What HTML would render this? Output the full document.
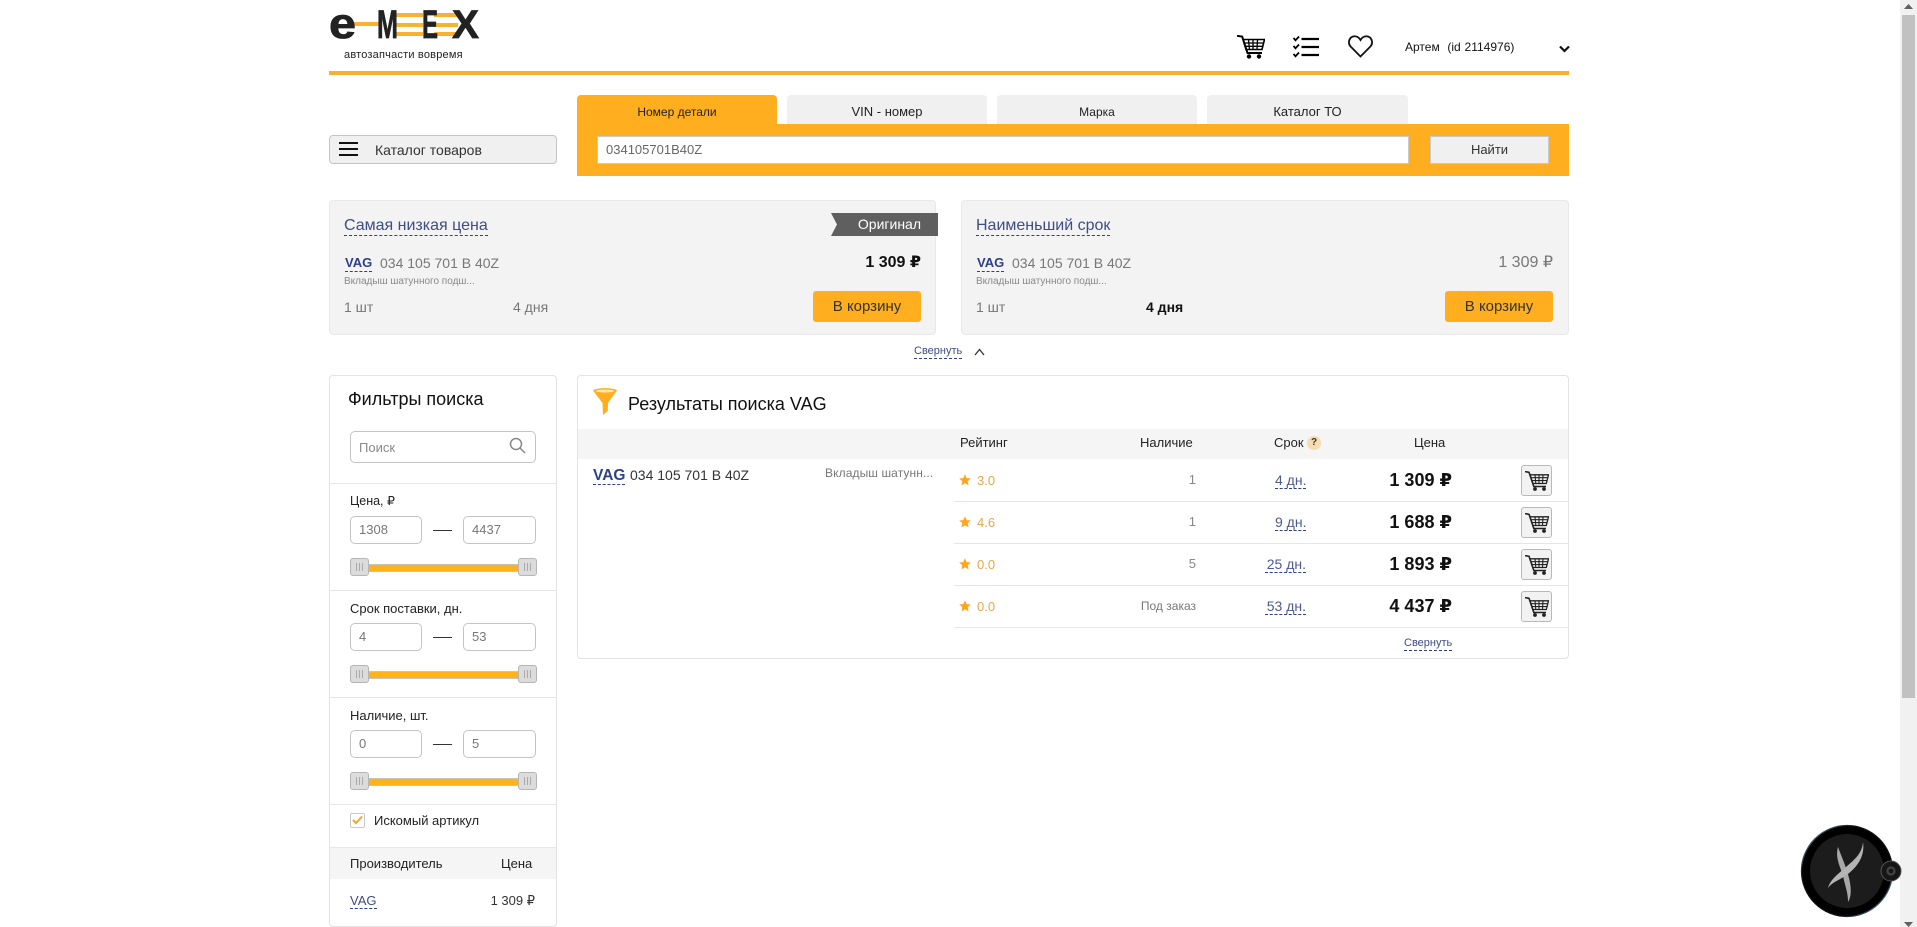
<!DOCTYPE html>
<html lang="ru"><head><meta charset="utf-8"><title>EMEX</title>
<style>
html,body{margin:0;padding:0;width:1917px;height:927px;overflow:hidden;background:#fff}
body{position:relative;font-family:"Liberation Sans","DejaVu Sans",sans-serif;color:#222}
.a,.t,.box,svg.i{position:absolute}
.t{white-space:nowrap;line-height:16px;height:16px}
.r{text-align:right}
.c{text-align:center}
.d{position:absolute;white-space:nowrap;color:#3f4c86;border-bottom:1px dashed #2f4088}
.tab{position:absolute;top:95px;height:29px;width:200px;background:#f0f0f0;border-radius:4px 4px 0 0;text-align:center;font-size:12.500px;line-height:34px;color:#222}
.card{position:absolute;top:200px;height:133px;width:605px;background:#f3f3f3;border:1px solid #e8e8e8;border-radius:4px}
.btn{position:absolute;width:108px;height:31px;top:291px;background:#ffae1f;border-radius:3px;text-align:center;line-height:32px;font-size:15px;color:#333}
.panel{position:absolute;background:#fff;border:1px solid #e3e3e3;border-radius:4px;box-sizing:border-box}
.sep{position:absolute;height:1px;background:#e6e6e6}
.in{position:absolute;box-sizing:border-box;background:#fff;border:1px solid #c4c4c4;border-radius:5px;height:28px;font-size:13px;line-height:26px;color:#777;padding-left:8px}
.h{position:absolute;width:19px;height:18px;box-sizing:border-box;background:#dcdcdc;border:1px solid #b5b5b5;border-radius:3px}
.h:after{content:"";position:absolute;left:5px;top:4px;width:1px;height:8px;background:#aaa;box-shadow:3px 0 0 #aaa,6px 0 0 #aaa}
.tr{position:absolute;left:368px;width:151px;height:6px;background:#ffb31a;border-top:1px solid #c9c3b4;border-bottom:1px solid #c9c3b4}
.dash{position:absolute;left:433px;width:19px;height:1px;background:#333}
.cb{position:absolute;left:1521px;width:31px;height:31px;box-sizing:border-box;background:#f2f2f2;border:1px solid #b9b9b9;border-radius:3px}
.cb svg{position:absolute;left:3px;top:5px}
.bar{fill:#f8b133}
.lbl{font-size:13px;color:#222}
.rt{font-size:13px;color:#e9a64b}
.st{font-size:14px;line-height:16px;height:16px;color:#4d5a90}
.pr{font-size:18px;font-weight:700;color:#111}
</style></head><body>

<!-- logo -->
<svg class="i" style="left:329px;top:8px" width="152" height="34" viewBox="0 0 152 34">
<rect class="bar" x="22" y="14" width="30" height="4"/>
<rect class="bar" x="66" y="5" width="28" height="4"/><rect class="bar" x="66" y="15" width="28" height="4"/><rect class="bar" x="66" y="24" width="28" height="4"/>
<rect class="bar" x="105" y="5" width="24" height="4"/><rect class="bar" x="105" y="15" width="24" height="4"/><rect class="bar" x="105" y="24" width="24" height="4"/>
<g font-family="Liberation Sans" font-weight="700" fill="#222" stroke="#222" stroke-width=".8">
<text x="0" y="30" font-size="43" textLength="27" lengthAdjust="spacingAndGlyphs">e</text>
<text x="48" y="30" font-size="40" textLength="21" lengthAdjust="spacingAndGlyphs">M</text>
<text x="93" y="30" font-size="40" textLength="16" lengthAdjust="spacingAndGlyphs">E</text>
<text x="123" y="30" font-size="40" textLength="27" lengthAdjust="spacingAndGlyphs">X</text>
</g></svg>
<div class="t" style="left:344px;top:47px;font-size:11px;color:#222;letter-spacing:.2px">автозапчасти вовремя</div>
<div class="a" style="left:329px;top:71px;width:1240px;height:4px;background:#f6b034"></div>

<!-- header icons -->
<svg class="i" style="left:1237px;top:35px" width="28" height="24" viewBox="0 0 28 24" fill="none" stroke="#000">
<path d="M0 .8 5.200 1.600 10.500 18H25" stroke-width="2"/>
<path d="M6 4.500H27.500L25 14.500H9Z" stroke-width="1.600"/>
<path d="M7 8H26.500M8 11.300H26M11.500 4.500 12.500 14.500M16 4.500V14.500M20.500 4.500 20 14.500" stroke-width="1.300"/>
<circle cx="12" cy="21.500" r="2.200" fill="#000" stroke="none"/><circle cx="22" cy="21.500" r="2.200" fill="#000" stroke="none"/>
</svg>
<svg class="i" style="left:1293px;top:36px" width="27" height="22" viewBox="0 0 27 22" fill="none" stroke="#000">
<path d="M8.500 3H26M8.500 11H26M8.500 19H26" stroke-width="2.200"/>
<path d="M.5 2 2.500 4.300 6 .5M.5 10 2.500 12.300 6 8.500M.5 18 2.500 20.300 6 16.500" stroke-width="1.800"/>
</svg>
<svg class="i" style="left:1348px;top:35px" width="25" height="23" viewBox="0 0 25 23" fill="none" stroke="#111" stroke-width="1.800">
<path d="M12.500 21.500 2.600 11.500C-.3 8.400.8 2.800 5 1.500 8.200.6 11 2.400 12.500 5 14 2.400 16.800.6 20 1.500 24.200 2.800 25.300 8.400 22.400 11.500Z"/>
</svg>
<div class="t" style="left:1405px;top:39px;font-size:12px;color:#111;word-spacing:.5px">Артем &nbsp;(id 2114976)</div>
<svg class="i" style="left:1559px;top:45px" width="11" height="8" viewBox="0 0 11 8" fill="none" stroke="#111" stroke-width="2.200"><path d="M1 1.500 5.500 6 10 1.500"/></svg>

<!-- catalog button -->
<div class="a" style="left:329px;top:135px;width:228px;height:29px;box-sizing:border-box;background:#f0f0f0;border:1px solid #c4c4c4;border-radius:4px"></div>
<div class="a" style="left:339px;top:142px;width:19px;height:2px;background:#111;box-shadow:0 6px 0 #111,0 12px 0 #111"></div>
<div class="t" style="left:375px;top:142px;font-size:14px;color:#333">Каталог товаров</div>

<!-- tabs + search -->
<div class="tab" style="left:577px;background:#ffae1f;height:30px;font-size:12px">Номер детали</div>
<div class="tab" style="left:787px;font-size:13px">VIN - номер</div>
<div class="tab" style="left:997px;font-size:12px">Марка</div>
<div class="tab" style="left:1207px;width:201px;font-size:13px">Каталог ТО</div>
<div class="a" style="left:577px;top:124px;width:992px;height:52px;background:#ffae1f"></div>
<div class="a" style="left:597px;top:136px;width:812px;height:28px;box-sizing:border-box;background:#fff;border:1px solid #c9c9c9;font-size:13px;line-height:26px;color:#666;padding-left:8px">034105701B40Z</div>
<div class="a" style="left:1430px;top:136px;width:119px;height:28px;box-sizing:border-box;background:#f0f0f0;border:1px solid #c9c9c9;font-size:13px;line-height:26px;color:#333;text-align:center">Найти</div>

<!-- card 1 -->
<div class="card" style="left:329px"></div>
<div class="d" style="left:344px;top:217px;font-size:16px;line-height:18px;height:18px">Самая низкая цена</div>
<svg class="i" style="left:831px;top:213px" width="107" height="23" viewBox="0 0 107 23"><path d="M0 0H107V23H0L6 11.500Z" fill="#5f5f5f"/></svg>
<div class="t r" style="left:838px;width:83px;top:216px;font-size:14px;color:#fff">Оригинал</div>
<div class="d" style="left:345px;top:255px;font-size:13px;line-height:16px;height:16px;font-weight:700;color:#2f4088">VAG</div>
<div class="t" style="left:380px;top:255px;font-size:14px;color:#777">034 105 701 В 40Z</div>
<div class="t r" style="left:821px;width:100px;top:255px;font-size:16px;font-weight:700;color:#111">1 309 ₽</div>
<div class="t" style="left:344px;top:274px;font-size:10px;color:#888">Вкладыш шатунного подш...</div>
<div class="t" style="left:344px;top:299px;font-size:14px;color:#777">1 шт</div>
<div class="t" style="left:513px;top:299px;font-size:14px;color:#777">4 дня</div>
<div class="btn" style="left:813px">В корзину</div>

<!-- card 2 -->
<div class="card" style="left:961px;width:606px"></div>
<div class="d" style="left:976px;top:217px;font-size:16px;line-height:18px;height:18px">Наименьший срок</div>
<div class="d" style="left:977px;top:255px;font-size:13px;line-height:16px;height:16px;font-weight:700;color:#2f4088">VAG</div>
<div class="t" style="left:1012px;top:255px;font-size:14px;color:#777">034 105 701 В 40Z</div>
<div class="t r" style="left:1453px;width:100px;top:255px;font-size:16px;color:#777">1 309 ₽</div>
<div class="t" style="left:976px;top:274px;font-size:10px;color:#888">Вкладыш шатунного подш...</div>
<div class="t" style="left:976px;top:299px;font-size:14px;color:#777">1 шт</div>
<div class="t" style="left:1146px;top:299px;font-size:14px;font-weight:700;color:#111">4 дня</div>
<div class="btn" style="left:1445px">В корзину</div>

<div class="d" style="left:914px;top:345px;font-size:11px;line-height:13px;height:13px">Свернуть</div>
<svg class="i" style="left:974px;top:348px" width="11" height="8" viewBox="0 0 11 8" fill="none" stroke="#333" stroke-width="1.300"><path d="M1 7 5.500 1.500 10 7"/></svg>

<!-- filters -->
<div class="panel" style="left:329px;top:375px;width:228px;height:552px"></div>
<div class="t" style="left:348px;top:390px;font-size:18px;line-height:18px;height:18px;color:#111">Фильтры поиска</div>
<div class="in" style="left:350px;top:431px;width:186px;height:32px;line-height:32px;color:#888">Поиск</div>
<svg class="i" style="left:509px;top:437px" width="17" height="17" viewBox="0 0 17 17" fill="none" stroke="#888" stroke-width="1.500"><circle cx="7" cy="7" r="5.500"/><path d="M11 11 16 16"/></svg>

<div class="sep" style="left:330px;top:483px;width:226px"></div>
<div class="t lbl" style="left:350px;top:493px;font-size:12.500px">Цена, ₽</div>
<div class="in" style="left:350px;top:516px;width:72px">1308</div><div class="dash" style="top:530px"></div><div class="in" style="left:463px;top:516px;width:73px">4437</div>
<div class="tr" style="top:564px"></div><div class="h" style="left:350px;top:558px"></div><div class="h" style="left:518px;top:558px"></div>

<div class="sep" style="left:330px;top:590px;width:226px"></div>
<div class="t lbl" style="left:350px;top:601px">Срок поставки, дн.</div>
<div class="in" style="left:350px;top:623px;width:72px">4</div><div class="dash" style="top:637px"></div><div class="in" style="left:463px;top:623px;width:73px">53</div>
<div class="tr" style="top:671px"></div><div class="h" style="left:350px;top:665px"></div><div class="h" style="left:518px;top:665px"></div>

<div class="sep" style="left:330px;top:697px;width:226px"></div>
<div class="t lbl" style="left:350px;top:708px">Наличие, шт.</div>
<div class="in" style="left:350px;top:730px;width:72px">0</div><div class="dash" style="top:744px"></div><div class="in" style="left:463px;top:730px;width:73px">5</div>
<div class="tr" style="top:778px"></div><div class="h" style="left:350px;top:772px"></div><div class="h" style="left:518px;top:772px"></div>

<div class="sep" style="left:330px;top:804px;width:226px"></div>
<div class="a" style="left:350px;top:813px;width:15px;height:15px;box-sizing:border-box;background:#fff;border:1px solid #c9c9c9;border-radius:2px"></div>
<svg class="i" style="left:352px;top:815px" width="11" height="10" viewBox="0 0 11 10" fill="none" stroke="#f5a623" stroke-width="2"><path d="M1 5 4 8 10 1.500"/></svg>
<div class="t lbl" style="left:374px;top:813px">Искомый артикул</div>

<div class="a" style="left:330px;top:847px;width:226px;height:32px;background:#f5f5f5;border-top:1px solid #e8e8e8;box-sizing:border-box"></div>
<div class="t lbl" style="left:350px;top:856px">Производитель</div>
<div class="t lbl" style="left:501px;top:856px">Цена</div>
<div class="d" style="left:350px;top:893px;font-size:13px;line-height:15px;height:15px">VAG</div>
<div class="t r" style="left:435px;width:100px;top:893px;font-size:13px;color:#333">1 309 ₽</div>

<!-- results -->
<div class="panel" style="left:577px;top:375px;width:992px;height:284px"></div>
<svg class="i" style="left:593px;top:388px" width="24" height="27" viewBox="0 0 24 27">
<path d="M0 2.500C3 -.6 21 -.6 24 2.500L15 15 14.800 23 10 27 9.500 15Z" fill="#ffae1f"/>
<ellipse cx="12" cy="3" rx="9" ry="1.500" fill="#ffe9b8"/></svg>
<div class="t" style="left:628px;top:395px;font-size:18px;line-height:18px;height:18px;color:#111">Результаты поиска VAG</div>
<div class="a" style="left:578px;top:429px;width:990px;height:30px;background:#f5f5f5"></div>
<div class="t lbl" style="left:960px;top:435px">Рейтинг</div>
<div class="t lbl" style="left:1140px;top:435px">Наличие</div>
<div class="t lbl" style="left:1274px;top:435px">Срок</div>
<div class="a" style="left:1307px;top:436px;width:14px;height:14px;border-radius:50%;background:#f6dcaf;font-size:10px;font-weight:700;line-height:14px;text-align:center;color:#333">?</div>
<div class="t lbl" style="left:1414px;top:435px">Цена</div>

<div class="d" style="left:593px;top:467px;font-size:15.500px;line-height:17px;height:17px;font-weight:700;color:#2f4088">VAG</div>
<div class="t" style="left:630px;top:467px;font-size:14px;color:#333">034 105 701 В 40Z</div>
<div class="t" style="left:825px;top:465px;font-size:12px;color:#777;letter-spacing:.1px">Вкладыш шатунн...</div>

<div class="sep" style="left:954px;top:501px;width:614px"></div>
<div class="sep" style="left:954px;top:543px;width:614px"></div>
<div class="sep" style="left:954px;top:585px;width:614px"></div>
<div class="sep" style="left:954px;top:627px;width:614px"></div>

<svg width="0" height="0" style="position:absolute"><defs>
<symbol id="star" viewBox="0 0 12 12"><path d="M6 .3 7.700 4.100 11.800 4.500 8.700 7.300 9.600 11.400 6 9.300 2.400 11.400 3.300 7.300.2 4.500 4.300 4.100Z" fill="#ffa51f"/></symbol>
<symbol id="cart" viewBox="0 0 24 20"><g fill="none" stroke="#222">
<path d="M0 .6 4 1.300 8.800 15.500H21" stroke-width="1.600"/>
<path d="M5 3.800H23.500L21.300 12.500H7.800Z" stroke-width="1.300"/>
<path d="M6 6.700H22.800M7 9.600H22.200M10 3.800 10.800 12.500M14 3.800V12.500M18 3.800 17.500 12.500" stroke-width="1.100"/></g>
<circle cx="10" cy="18" r="1.900" fill="#222"/><circle cx="19" cy="18" r="1.900" fill="#222"/></symbol>
</defs></svg>

<!-- row 1 -->
<svg class="i" style="left:959px;top:474px" width="12" height="12"><use href="#star"/></svg>
<div class="t rt" style="left:977px;top:473px">3.0</div>
<div class="t r lbl" style="left:1096px;width:100px;top:472px;color:#888">1</div>
<div class="d r st" style="left:1275px;top:472px;width:31px">4 дн.</div>
<div class="t r pr" style="left:1352px;width:100px;top:472px">1 309 ₽</div>
<div class="cb" style="top:465px"><svg width="24" height="20"><use href="#cart"/></svg></div>
<!-- row 2 -->
<svg class="i" style="left:959px;top:516px" width="12" height="12"><use href="#star"/></svg>
<div class="t rt" style="left:977px;top:515px">4.6</div>
<div class="t r lbl" style="left:1096px;width:100px;top:514px;color:#888">1</div>
<div class="d r st" style="left:1275px;top:514px;width:31px">9 дн.</div>
<div class="t r pr" style="left:1352px;width:100px;top:514px">1 688 ₽</div>
<div class="cb" style="top:507px"><svg width="24" height="20"><use href="#cart"/></svg></div>
<!-- row 3 -->
<svg class="i" style="left:959px;top:558px" width="12" height="12"><use href="#star"/></svg>
<div class="t rt" style="left:977px;top:557px">0.0</div>
<div class="t r lbl" style="left:1096px;width:100px;top:556px;color:#888">5</div>
<div class="d r st" style="left:1265px;top:556px;width:41px">25 дн.</div>
<div class="t r pr" style="left:1352px;width:100px;top:556px">1 893 ₽</div>
<div class="cb" style="top:549px"><svg width="24" height="20"><use href="#cart"/></svg></div>
<!-- row 4 -->
<svg class="i" style="left:959px;top:600px" width="12" height="12"><use href="#star"/></svg>
<div class="t rt" style="left:977px;top:599px">0.0</div>
<div class="t r" style="left:1096px;width:100px;top:598px;font-size:12px;color:#777">Под заказ</div>
<div class="d r st" style="left:1265px;top:598px;width:41px">53 дн.</div>
<div class="t r pr" style="left:1352px;width:100px;top:598px">4 437 ₽</div>
<div class="cb" style="top:591px"><svg width="24" height="20"><use href="#cart"/></svg></div>

<div class="d" style="left:1404px;top:637px;font-size:11px;line-height:13px;height:13px">Свернуть</div>

<!-- scrollbar -->
<div class="a" style="left:1900px;top:0;width:17px;height:927px;background:#f1f1f1"></div>
<div class="a" style="left:1902px;top:15px;width:13px;height:683px;background:#c1c1c1"></div>
<svg class="i" style="left:1904px;top:4px" width="9" height="6"><path d="M4.500 0 9 5H0Z" fill="#606060"/></svg>
<svg class="i" style="left:1904px;top:922px" width="9" height="5"><path d="M0 0H9L4.500 5Z" fill="#606060"/></svg>

<!-- floating widget -->
<svg class="i" style="left:1796px;top:820px" width="112" height="104" viewBox="0 0 112 104">
<defs><linearGradient id="rim" x1="0" y1="0" x2="1" y2="1"><stop offset="0" stop-color="#5fa2b8"/><stop offset=".3" stop-color="#111"/><stop offset=".7" stop-color="#111"/><stop offset="1" stop-color="#5fa2b8"/></linearGradient></defs>
<circle cx="51" cy="51" r="45.500" fill="#000" stroke="url(#rim)" stroke-width="1.300"/>
<circle cx="51" cy="51" r="37" fill="#1c1c1c"/>
<path d="M42 27C39 38 44 46 47 56 49 66 52 72 52 82 56 76 55 66 53 58 50 46 46 38 42 27Z" fill="#a8a8a8"/>
<path d="M67 22C66 34 58 40 50 47 42 54 34 60 32 68 36 62 44 60 52 54 62 46 69 36 67 22Z" fill="#b4b4b4"/>
<circle cx="95" cy="51" r="10" fill="#161616" stroke="#555" stroke-width="1"/>
<circle cx="95" cy="51" r="3.500" fill="none" stroke="#444" stroke-width="2.200"/>
</svg>
</body></html>
